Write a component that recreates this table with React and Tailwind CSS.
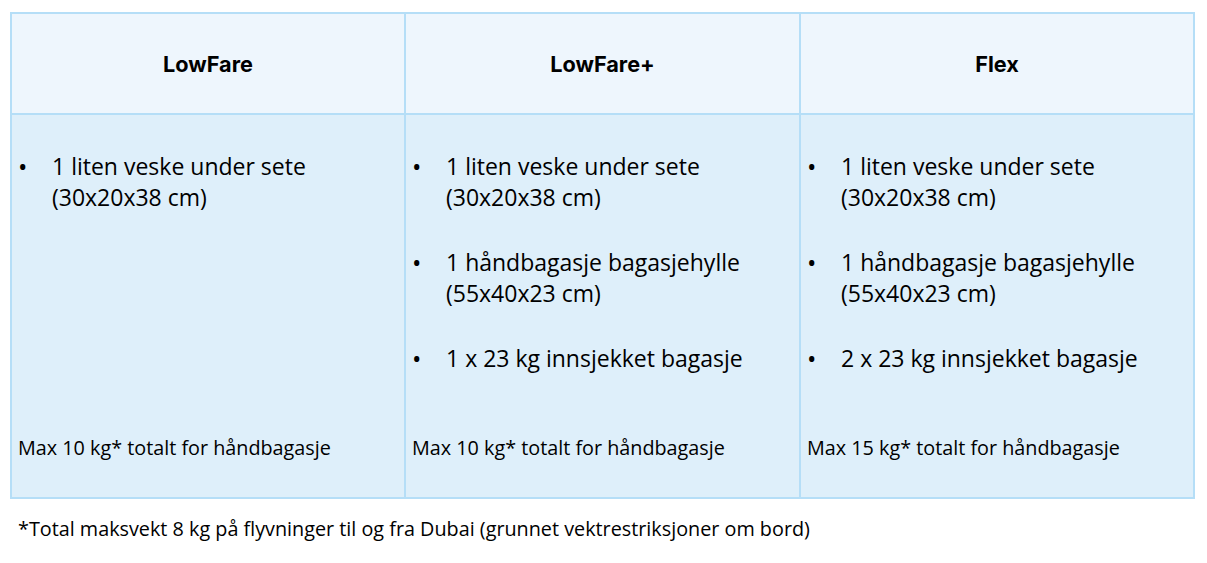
import React from "react";

const plans = [
  {
    name: "LowFare",
    items: [["1 liten veske under sete", "(30x20x38 cm)"]],
    max: "Max 10 kg* totalt for håndbagasje",
  },
  {
    name: "LowFare+",
    items: [
      ["1 liten veske under sete", "(30x20x38 cm)"],
      ["1 håndbagasje bagasjehylle", "(55x40x23 cm)"],
      ["1 x 23 kg innsjekket bagasje"],
    ],
    max: "Max 10 kg* totalt for håndbagasje",
  },
  {
    name: "Flex",
    items: [
      ["1 liten veske under sete", "(30x20x38 cm)"],
      ["1 håndbagasje bagasjehylle", "(55x40x23 cm)"],
      ["2 x 23 kg innsjekket bagasje"],
    ],
    max: "Max 15 kg* totalt for håndbagasje",
  },
];

const body = { fontFamily: "'Open Sans', Lato, sans-serif" };

export default function App() {
  return (
    <div className="w-[1207px] h-[563px] bg-white text-black" style={body}>
      <div className="pt-[12px] pl-[10px]">
        <div className="w-[1185px] grid grid-cols-[392px_395px_394px] border-2 border-[#b5def7]">
          {/* header row */}
          {plans.map((p, i) => (
            <div
              key={p.name}
              className={
                "h-[101px] flex items-center justify-center bg-[#eef6fd] border-b-2 border-[#b5def7] " +
                (i > 0 ? "border-l-2" : "")
              }
            >
              <span className="text-[21.7px] font-bold pt-[2px]" style={{ fontFamily: "Inter, sans-serif" }}>
                {p.name}
              </span>
            </div>
          ))}
          {/* body row */}
          {plans.map((p, i) => (
            <div
              key={p.name + "b"}
              className={
                "h-[382px] bg-[#deeffa] border-[#b5def7] flex flex-col pt-[36px] pl-[6px] " +
                (i > 0 ? "border-l-2" : "")
              }
            >
              <ul className="flex flex-col gap-[34px] text-[23px] leading-[31px]">
                {p.items.map((it, j) => (
                  <li key={j} className="flex">
                    <span className="w-[34px] text-[25px] leading-[31px]">•</span>
                    <span>
                      {it.map((l, k) => (
                        <div key={k}>{l}</div>
                      ))}
                    </span>
                  </li>
                ))}
              </ul>
              <div className="mt-auto mb-[36px] text-[19.8px] leading-[26px]">{p.max}</div>
            </div>
          ))}
        </div>
      </div>
      <div className="pl-[18px] pt-[17px] text-[19.8px] leading-[26px]">
        *Total maksvekt 8 kg på flyvninger til og fra Dubai (grunnet vektrestriksjoner om bord)
      </div>
    </div>
  );
}
